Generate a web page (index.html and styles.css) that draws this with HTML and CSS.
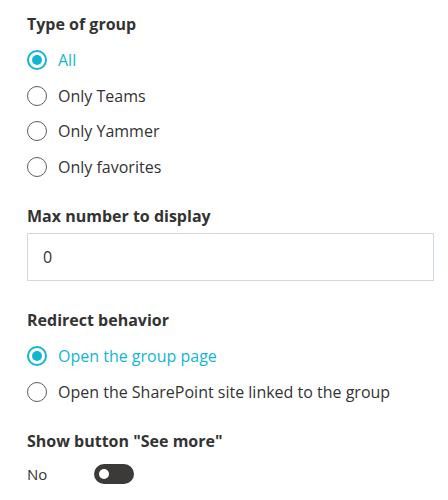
FILE: index.html
```html
<!DOCTYPE html>
<html lang="en">
<head>
    <meta charset="UTF-8">
    <title>Group settings</title>
    <link rel="stylesheet" href="styles.css">
</head>
<body>
    <div class="pane">
        <div class="field">
            <div class="field-label">Type of group</div>
            <div class="choices">
                <label class="choice checked"><span class="radio"></span>All</label>
                <label class="choice"><span class="radio"></span>Only Teams</label>
                <label class="choice"><span class="radio"></span>Only Yammer</label>
                <label class="choice"><span class="radio"></span>Only favorites</label>
            </div>
        </div>
        <div class="field">
            <div class="field-label">Max number to display</div>
            <div class="text-box">0</div>
        </div>
        <div class="field">
            <div class="field-label">Redirect behavior</div>
            <div class="choices">
                <label class="choice checked"><span class="radio"></span>Open the group page</label>
                <label class="choice"><span class="radio"></span>Open the SharePoint site linked to the group</label>
            </div>
        </div>
        <div class="field">
            <div class="field-label">Show button "See more"</div>
            <div class="toggle-row">
                <span class="toggle-text">No</span>
                <span class="toggle"><span class="knob"></span></span>
            </div>
        </div>
    </div>
</body>
</html>
```

FILE: styles.css
```css
/* property pane */
body {
    background-color: #ffffff;
    color: #333333;
    font-family: "Open Sans", "Noto Sans", sans-serif;
    margin: 0;
    padding: 0;
}
.pane {
    padding: 14px 15px 0 27px;
}
.field {
    margin-bottom: 29px;
}
.field-label {
    font-size: 16px;
    font-weight: 700;
    line-height: 20px;
    color: #333333;
}
.choices {
    display: flex;
    flex-direction: column;
    gap: 15.7px;
    margin-top: 16px;
}
.choice {
    display: flex;
    align-items: center;
    height: 20px;
    font-size: 16px;
    color: #333333;
}
.radio {
    box-sizing: border-box;
    width: 20px;
    height: 20px;
    margin-right: 11px;
    border: 1px solid #605e5c;
    border-radius: 50%;
    flex-shrink: 0;
    position: relative;
}
.choice.checked {
    color: #12b5d0;
}
.choice.checked .radio {
    border: 2px solid #12b5d0;
}
.choice.checked .radio::after {
    content: "";
    position: absolute;
    left: 3px;
    top: 3px;
    width: 10px;
    height: 10px;
    border-radius: 50%;
    background-color: #12b5d0;
}
.text-box {
    box-sizing: border-box;
    margin-top: 7px;
    height: 48px;
    width: 407px;
    border: 1px solid #cfd8e3;
    padding: 0 15px;
    display: flex;
    align-items: center;
    font-size: 16px;
    color: #333333;
}
.toggle-row {
    display: flex;
    align-items: center;
    margin-top: 13px;
    height: 20px;
}
.toggle-text {
    width: 67px;
    font-size: 15px;
    color: #333333;
}
.toggle {
    box-sizing: border-box;
    width: 40px;
    height: 20px;
    border-radius: 10px;
    background-color: #3b3a39;
    display: flex;
    align-items: center;
    padding-left: 5px;
}
.knob {
    width: 10px;
    height: 10px;
    border-radius: 50%;
    background-color: #ffffff;
}
```
